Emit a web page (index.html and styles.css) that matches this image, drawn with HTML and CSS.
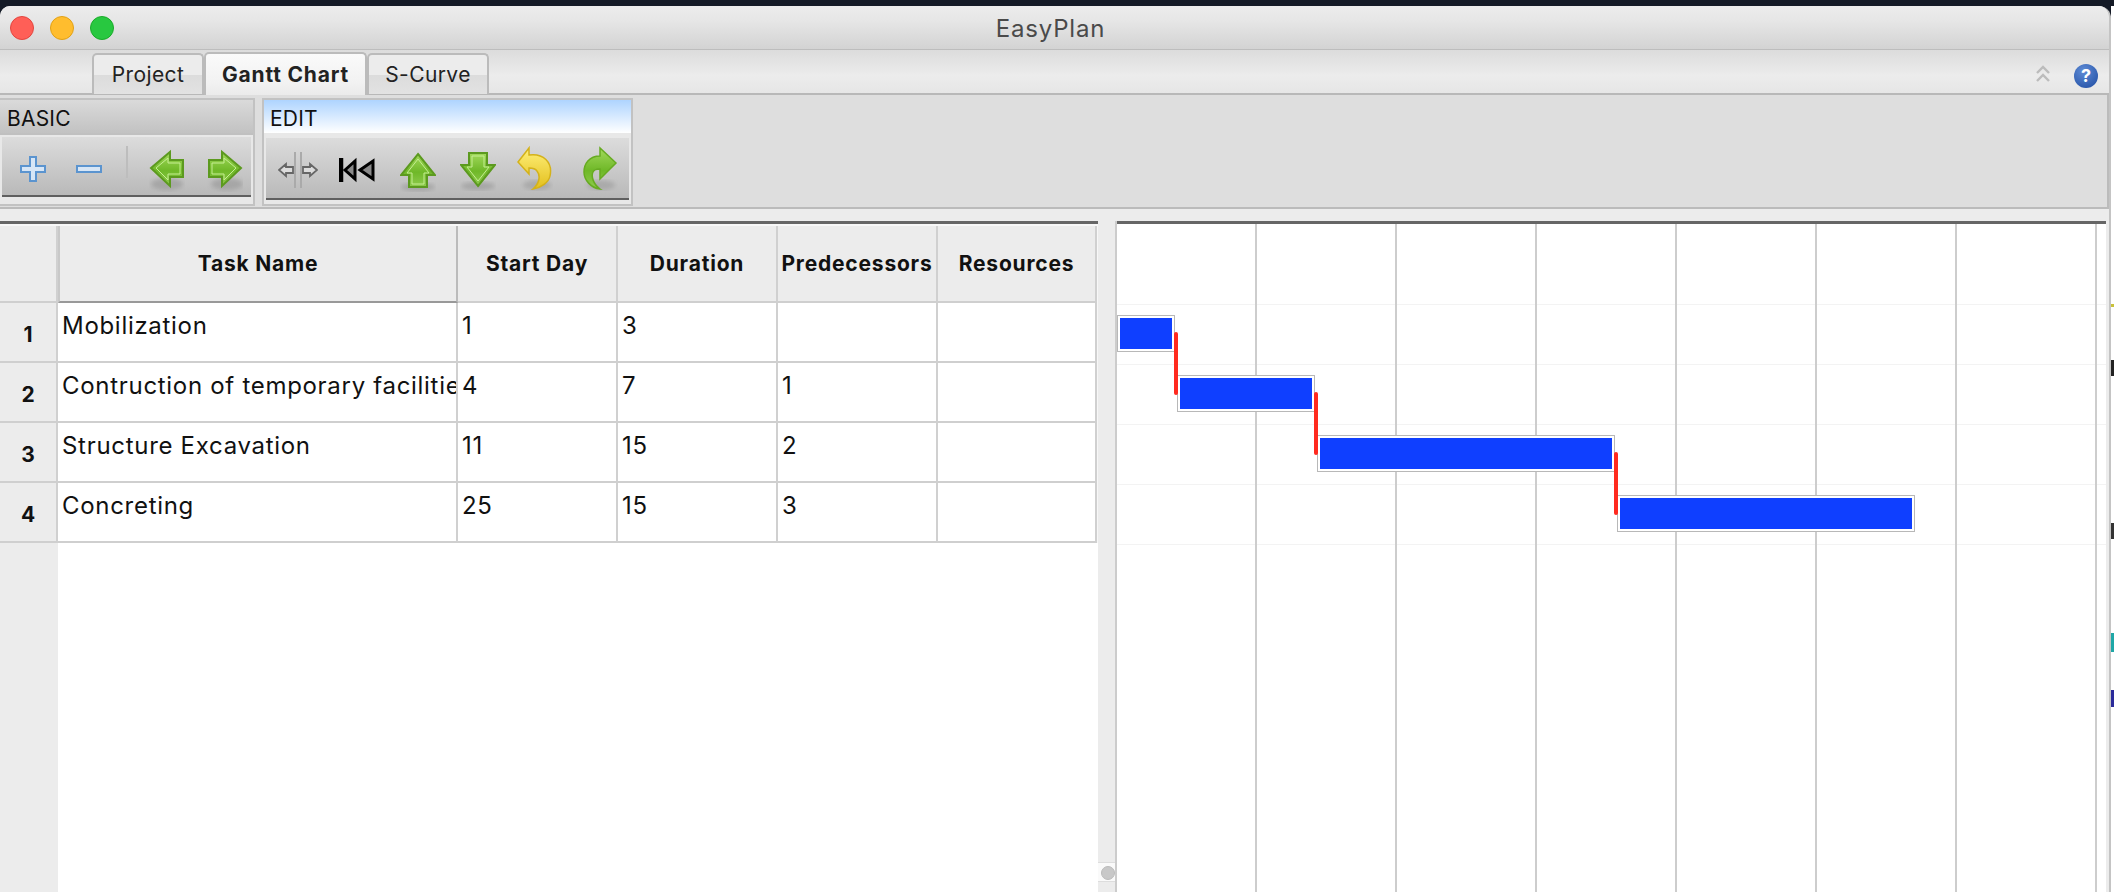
FILE: index.html
```html
<!DOCTYPE html>
<html lang="en">
<head>
<meta charset="UTF-8">
<title>EasyPlan</title>
<link rel="stylesheet" href="styles.css">
</head>
<body>
<svg class="defs" width="0" height="0">
    <defs>
        <linearGradient id="greenV" x1="0" y1="0" x2="0" y2="1">
            <stop offset="0" stop-color="#a2d95c"/>
            <stop offset="0.55" stop-color="#6fb828"/>
            <stop offset="1" stop-color="#8fcb4e"/>
        </linearGradient>
        <linearGradient id="yellowV" x1="0" y1="0" x2="0" y2="1">
            <stop offset="0" stop-color="#fff07a"/>
            <stop offset="1" stop-color="#e3bf1c"/>
        </linearGradient>
        <filter id="soft"><feGaussianBlur stdDeviation="2"/></filter>
    </defs>
</svg>

<div class="topbar"></div>
<div class="desk">
<div class="window">
    <div class="titlebar">
        <span class="light red"></span>
        <span class="light orange"></span>
        <span class="light green"></span>
        <div class="title">EasyPlan</div>
    </div>

    <div class="tabrow">
        <div class="tab">Project</div>
        <div class="tab active">Gantt Chart</div>
        <div class="tab">S-Curve</div>
        <svg class="chevron" width="16" height="20" viewBox="0 0 16 20">
            <path d="M2 9 8 3l6 6M2 17l6-6 6 6" fill="none" stroke="#bcbcbc" stroke-width="2.4"/>
        </svg>
        <div class="help"><span>?</span></div>
    </div>

    <div class="toolbar">
        <div class="panel basic">
            <div class="panel-head">BASIC</div>
            <div class="strip">
                <svg class="ic-plus" width="26" height="60" viewBox="0 0 26 60">
                    <path d="M10 20h6v9h9v6h-9v9h-6v-9H1v-6h9z" fill="#d7e6f6" stroke="#5b94cf" stroke-width="2"/>
                </svg>
                <svg class="ic-minus" width="26" height="60" viewBox="0 0 26 60">
                    <path d="M1 29h24v6H1z" fill="#d7e6f6" stroke="#5b94cf" stroke-width="2"/>
                </svg>
                <div class="sep"></div>
                <svg class="ic-left" width="36" height="60" viewBox="0 0 36 60">
                    <ellipse cx="18" cy="47" rx="16" ry="6" fill="#777" opacity=".35" filter="url(#soft)"/>
                    <path d="M2 31 21 15v8h13v17H21v9z" fill="url(#greenV)" stroke="#5c9a1f" stroke-width="2"/>
                    <path d="M7 31 19 21v5h12v11H19v6z" fill="none" stroke="#c6ee93" stroke-width="1"/>
                </svg>
                <svg class="ic-right" width="36" height="60" viewBox="0 0 36 60">
                    <ellipse cx="20" cy="47" rx="16" ry="6" fill="#777" opacity=".35" filter="url(#soft)"/>
                    <path d="M34 31 15 15v8H2v17h13v9z" fill="url(#greenV)" stroke="#5c9a1f" stroke-width="2"/>
                    <path d="M29 31 17 21v5H5v11h12v6z" fill="none" stroke="#c6ee93" stroke-width="1"/>
                </svg>
            </div>
        </div>
        <div class="panel edit">
            <div class="panel-head">EDIT</div>
            <div class="strip">
                <svg class="ic-split" width="40" height="62" viewBox="0 0 40 62">
                    <path d="M17 14v36M23 14v36" stroke="#aaa" stroke-width="2"/>
                    <path d="M1 32l7-6v3h7v6H8v3zM39 32l-7-6v3h-7v6h7v3z" fill="#dcdcdc" stroke="#666" stroke-width="1.8"/>
                </svg>
                <svg class="ic-rewind" width="36" height="62" viewBox="0 0 36 62">
                    <path d="M2 20v24" stroke="#000" stroke-width="4.5"/>
                    <path d="M6 32l10-9v18zM21 32l13-9v18z" fill="#8a8a8a" stroke="#000" stroke-width="3"/>
                </svg>
                <svg class="ic-up" width="36" height="62" viewBox="0 0 36 62">
                    <ellipse cx="18" cy="49" rx="17" ry="4" fill="#777" opacity=".35" filter="url(#soft)"/>
                    <path d="M18 16 35 37H27V49H9V37H1z" fill="url(#greenV)" stroke="#5c9a1f" stroke-width="2"/>
                    <path d="M18 21 29 35H24V46H12V35H7z" fill="none" stroke="#c6ee93" stroke-width="1"/>
                </svg>
                <svg class="ic-down" width="36" height="62" viewBox="0 0 36 62">
                    <ellipse cx="18" cy="48" rx="17" ry="4" fill="#777" opacity=".35" filter="url(#soft)"/>
                    <path d="M18 48 35 27H27V15H9V27H1z" fill="url(#greenV)" stroke="#5c9a1f" stroke-width="2"/>
                    <path d="M18 43 29 29H24V18H12V29H7z" fill="none" stroke="#c6ee93" stroke-width="1"/>
                </svg>
                <svg class="ic-undo" width="36" height="62" viewBox="0 0 36 62">
                    <ellipse cx="20" cy="47" rx="14" ry="5" fill="#777" opacity=".3" filter="url(#soft)"/>
                    <path d="M1 24 12 10v7c14-2 24 7 21 21-1 6-9 12-17 13 6-5 8-13 4-18-2-3-5-3-8-3v6z" fill="url(#yellowV)" stroke="#d4b21a" stroke-width="1.5"/>
                </svg>
                <svg class="ic-redo" width="36" height="62" viewBox="0 0 36 62">
                    <ellipse cx="18" cy="47" rx="14" ry="5" fill="#777" opacity=".3" filter="url(#soft)"/>
                    <path d="M33 25 17 10v8C6 18 1 26 1 34c0 8 7 16 16 17-7-5-9-13-7-17 1-3 4-3 7-3v10z" fill="url(#greenV)" stroke="#67ab22" stroke-width="1.5"/>
                </svg>
            </div>
        </div>
    </div>

    <div class="gap"></div>

    <div class="main">
        <div class="table-side">
            <div class="grid">
                <div class="corner"></div>
                <div class="th selected">Task Name</div>
                <div class="th">Start Day</div>
                <div class="th">Duration</div>
                <div class="th">Predecessors</div>
                <div class="th">Resources</div>

                <div class="rownum">1</div>
                <div class="td">Mobilization</div>
                <div class="td">1</div>
                <div class="td">3</div>
                <div class="td"></div>
                <div class="td"></div>

                <div class="rownum">2</div>
                <div class="td">Contruction of temporary facilities</div>
                <div class="td">4</div>
                <div class="td">7</div>
                <div class="td">1</div>
                <div class="td"></div>

                <div class="rownum">3</div>
                <div class="td">Structure Excavation</div>
                <div class="td">11</div>
                <div class="td">15</div>
                <div class="td">2</div>
                <div class="td"></div>

                <div class="rownum">4</div>
                <div class="td">Concreting</div>
                <div class="td">25</div>
                <div class="td">15</div>
                <div class="td">3</div>
                <div class="td"></div>
            </div>
            <div class="rest"><div class="rest-head"></div></div>
        </div>

        <div class="splitter"><div class="knob"></div></div>

        <div class="chart">
            <div class="bar" style="left:0px;top:91px;width:58px"></div>
            <div class="bar" style="left:60px;top:151px;width:138px"></div>
            <div class="bar" style="left:200px;top:211px;width:298px"></div>
            <div class="bar" style="left:500px;top:271px;width:298px"></div>
            <div class="link" style="left:57px;top:108px"></div>
            <div class="link" style="left:197px;top:168px"></div>
            <div class="link" style="left:497px;top:228px"></div>
        </div>
    </div>
</div>
<div class="behind">
    <i class="bit b1"></i>
    <i class="bit b2"></i>
    <i class="bit b3"></i>
    <i class="bit b4"></i>
    <i class="bit b5"></i>
</div>
</div>
</body>
</html>
```

FILE: styles.css
```css
* {
    box-sizing: border-box;
}
html, body {
    margin: 0;
    height: 100%;
    overflow: hidden;
    background: #fff;
}
body {
    font-family: Inter, "Liberation Sans", sans-serif;
    color: #111;
    display: flex;
    flex-direction: column;
}
.defs {
    position: absolute;
}
.topbar {
    height: 6px;
    background: #141a26;
}
.desk {
    flex: 1;
    display: flex;
    min-height: 0;
    background: #141a26;
}
.window {
    width: 2111px;
    display: flex;
    flex-direction: column;
    background: #ececec;
    border-right: 2px solid #c4c4c4;
    border-radius: 10px 12px 0 0;
    overflow: hidden;
}

/* title bar */
.titlebar {
    height: 44px;
    display: flex;
    align-items: center;
    padding-left: 10px;
    gap: 16px;
    position: relative;
    background: linear-gradient(#ececec, #e6e6e6 35%, #d3d3d3);
    border-bottom: 1px solid #bdbdbd;
}
.light {
    width: 24px;
    height: 24px;
    border-radius: 50%;
}
.red { background: #ff5f57; border: 1px solid #e2463f; }
.orange { background: #ffbd2e; border: 1px solid #e1a116; }
.green { background: #28c840; border: 1px solid #1aab29; }
.title {
    position: absolute;
    left: 0;
    right: 0;
    top: 0;
    bottom: 0;
    display: flex;
    align-items: center;
    justify-content: center;
    font-size: 24px;
    letter-spacing: 0.8px;
    color: #4a4a4a;
    padding: 1px 8px 0 0;
}

/* tabs */
.tabrow {
    height: 45px;
    display: flex;
    align-items: flex-end;
    padding-left: 92px;
    background: linear-gradient(#dcdcdc, #ececec 60%, #e6e6e6);
    border-bottom: 2px solid #b8b8b8;
    position: relative;
}
.tab {
    height: 41px;
    margin-bottom: -1px;
    display: flex;
    align-items: center;
    justify-content: center;
    font-size: 21px;
    letter-spacing: 0.4px;
    color: #222;
    white-space: nowrap;
    border: 2px solid #bbb;
    border-bottom: none;
    border-radius: 5px 5px 0 0;
    background: linear-gradient(#ececec, #ececec 50%, #dcdcdc 52%, #e2e2e2);
}
.tab:nth-child(1) { width: 112px; }
.tab:nth-child(2) { width: 163px; font-weight: 700; letter-spacing: 0.8px; background: linear-gradient(#fafafa, #f2f2f2 70%, #ebebeb); }
.tab:nth-child(3) { width: 122px; }
.tab.active {
    margin-bottom: -2px;
    height: 43px;
}
.chevron {
    position: absolute;
    left: 2035px;
    top: 14px;
}
.help {
    position: absolute;
    left: 2074px;
    top: 14px;
    width: 24px;
    height: 24px;
    border-radius: 50%;
    background: radial-gradient(circle at 40% 30%, #5f8cd6, #1d4aa0);
    color: #fff;
    font-size: 18px;
    font-weight: 700;
    text-align: center;
    line-height: 24px;
}

/* toolbar */
.toolbar {
    height: 114px;
    display: flex;
    gap: 7px;
    padding-top: 3px;
    background: #dedede;
    border-right: 2px solid #bbb;
    border-bottom: 2px solid #bbb;
}
.panel {
    height: 108px;
    border: 2px solid #c2c2c2;
    background: #e8e8e8;
    display: flex;
    flex-direction: column;
}
.basic {
    width: 255px;
    border-left: none;
}
.edit {
    width: 371px;
}
.panel-head {
    height: 35px;
    padding: 3px 0 0 7px;
    display: flex;
    align-items: center;
    font-size: 21px;
    letter-spacing: 0.2px;
    background: linear-gradient(#dadada, #c2c2c2);
    border-bottom: 2px solid #c0c0c0;
}
.edit .panel-head {
    background: linear-gradient(#aed4ff, #fff);
    border-bottom: 2px solid #e8e8e8;
    padding-left: 6px;
}
.strip {
    display: flex;
    align-items: flex-start;
    height: 60px;
    margin: 2px 2px 0;
    background: linear-gradient(#dcdcdc, #b9b9b9);
    border-bottom: 2px solid #5f5f5f;
}
.edit .strip {
    height: 62px;
    margin: 3px 2px 0;
}
.ic-plus { margin-left: 18px; }
.ic-minus { margin-left: 30px; }
.sep {
    width: 2px;
    height: 32px;
    margin: 9px 0 0 24px;
    background: #bdbdbd;
}
.ic-left { margin-left: 21px; }
.ic-right { margin-left: 22px; }
.ic-split { margin-left: 12px; }
.ic-rewind { margin-left: 21px; }
.ic-up { margin-left: 25px; }
.ic-down { margin-left: 24px; }
.ic-undo { margin-left: 21px; }
.ic-redo { margin-left: 30px; }

.gap {
    height: 12px;
    background: #ececec;
}

/* table and chart */
.main {
    flex: 1;
    min-height: 0;
    display: flex;
    padding-right: 3px;
}
.table-side {
    width: 1098px;
    display: flex;
    flex-direction: column;
    border-top: 3px solid #666;
    padding-top: 2px;
    background: #f7f7f7;
}
.grid {
    display: grid;
    grid-template-columns: 58px 400px 160px 160px 160px 159px;
    grid-auto-rows: 60px;
    grid-template-rows: 77px;
    width: 1097px;
}
.corner, .th, .rownum {
    background: #ececec;
    border-right: 2px solid #d0d0d0;
    border-bottom: 2px solid #cfcfcf;
}
.th {
    display: flex;
    align-items: center;
    justify-content: center;
    font-size: 21px;
    font-weight: 700;
    letter-spacing: 0.8px;
    white-space: nowrap;
}
.th.selected {
    border-left: 2px solid #c8c8c8;
    border-bottom: 2px solid #999;
    border-right: 2px solid #bbb;
}
.rownum {
    display: flex;
    align-items: center;
    justify-content: center;
    font-size: 21px;
    font-weight: 700;
    padding: 5px 0 0 0;
}
.td {
    background: #fff;
    border-right: 2px solid #d0d0d0;
    border-bottom: 2px solid #cfcfcf;
    padding: 5px 0 0 4px;
    font-size: 24px;
    letter-spacing: 0.7px;
    line-height: 36px;
    white-space: nowrap;
    overflow: hidden;
}
.rest {
    flex: 1;
    display: flex;
    background: #fff;
}
.rest-head {
    width: 58px;
    background: #ececec;
}
.splitter {
    width: 19px;
    background: #ececec;
    border-right: 2px solid #ccc;
    position: relative;
}
.knob {
    position: absolute;
    left: 0;
    right: 0;
    bottom: 10px;
    height: 20px;
    background: #fafafa;
    border-top: 1px solid #ddd;
    border-bottom: 1px solid #ddd;
}
.knob::after {
    content: "";
    position: absolute;
    left: 3px;
    top: 3px;
    width: 12px;
    height: 12px;
    border-radius: 50%;
    background: #c8c8c8;
    border: 1px solid #bbb;
}
.chart {
    flex: 1;
    position: relative;
    border-top: 3px solid #666;
    background-color: #fff;
    background-image:
        repeating-linear-gradient(to right, transparent 0, transparent 138px, #cdcdcd 138px, #cdcdcd 140px),
        repeating-linear-gradient(to bottom, transparent 0, transparent 59px, #f3f3f3 59px, #f3f3f3 60px);
    background-size: 100% 100%, 100% 300px;
    background-position: 0 0, 0 21px;
    background-repeat: no-repeat;
}
.bar {
    position: absolute;
    height: 37px;
    background: #0f3fff;
    border: 1px solid #b8b8b8;
    box-shadow: inset 0 0 0 2px #fff;
}
.link {
    position: absolute;
    width: 4px;
    height: 63px;
    background: #ff2a1f;
    border-radius: 2px;
}

/* sliver of whatever sits behind the window */
.behind {
    flex: 1;
    position: relative;
    background: #fff;
}
.bit {
    position: absolute;
    left: 0;
    width: 3px;
}
.b1 { top: 298px; height: 3px; background: #c9c23a; }
.b2 { top: 354px; height: 16px; background: #222; }
.b3 { top: 517px; height: 16px; background: #333; }
.b4 { top: 627px; height: 19px; background: #1fa7a7; }
.b5 { top: 684px; height: 17px; background: #2a2a9a; }
```
